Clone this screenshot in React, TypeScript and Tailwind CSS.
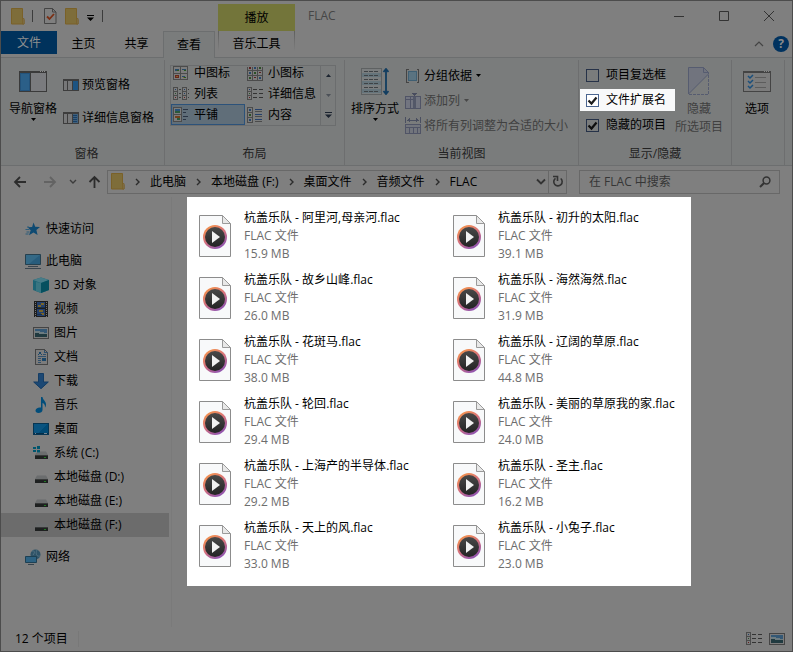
import React from "react";

type Kids = { children?: React.ReactNode };

const Folder = () => (
  <svg width="14" height="17" viewBox="0 0 14 17" aria-hidden="true">
    <path d="M.5.5h11v11h1.500v4.500H.5z" fill="#7e6d3a" stroke="#7a6128" />
    <path d="M11.500 10.500v5.500h1.500v-5.500z" fill="#7e7354" stroke="#7a6128" strokeWidth=".8" />
  </svg>
);

const DocCheck = () => (
  <svg width="13" height="16" viewBox="0 0 13 16" aria-hidden="true">
    <path d="M.5.5h8l3.500 3.500v11.500H.5z" fill="#7f7f7f" stroke="#444" />
    <path d="M8.500.5v3.500H12" fill="none" stroke="#444" />
    <path d="m3 8.500 2.500 2.500L10 6" fill="none" stroke="#7b2f14" strokeWidth="1.800" />
  </svg>
);

const Caret = ({ color = "#000", up = false }: { color?: string; up?: boolean }) => (
  <svg width="5" height="3" viewBox="0 0 5 3" aria-hidden="true">
    <path d={up ? "M0 3h5L2.500 0z" : "M0 0h5L2.500 3z"} fill={color} />
  </svg>
);

const MoreCaret = ({ color = "#000" }: { color?: string }) => (
  <svg width="7" height="6" viewBox="0 0 7 6" aria-hidden="true">
    <path d="M0 0h7v1H0zM0 2.500h7L3.500 6z" fill={color} />
  </svg>
);

const NavPane = () => (
  <svg width="28" height="21" viewBox="0 0 28 21" shapeRendering="crispEdges" aria-hidden="true">
    <path d="M0 0h28v21H0z" fill="#3a3a3a" />
    <path d="M1 2h10v18H1z" fill="#23527a" />
    <path d="M2 3h8v16H2z" fill="#2b5f88" />
    <path d="M12 2h15v18H12z" fill="#7a7b7e" />
    <path d="M21 0h1v1h-1zM23 0h1v1h-1zM25 0h1v1h-1z" fill="#8a8a8a" />
  </svg>
);

const SidePane = ({ lines = false }: { lines?: boolean }) => (
  <svg width="16" height="12" viewBox="0 0 16 12" shapeRendering="crispEdges" aria-hidden="true">
    <path d="M0 0h16v12H0z" fill="#3d3d3d" />
    <path d="M1 2h3v9H1zM5 2h4v9H5z" fill="#777879" />
    <path d="M10 2h5v9h-5z" fill={lines ? "#40607c" : "#1d5482"} />
    {lines && <path d="M10 3h4v1h-4zM10 5h4v1h-4zM10 7h4v1h-4zM10 9h4v1h-4z" fill="#173f66" />}
  </svg>
);

const MediumIcons = () => (
  <svg width="16" height="16" viewBox="0 0 16 16" shapeRendering="crispEdges" aria-hidden="true">
    <path d="M.5 1.500h14v13H.5zM7.500 1.500v13M.5 8h14" fill="#7c7c7c" stroke="#4b4b4b" />
    <path d="M2 4h4v2H2zM9 4h4v1H9zM9 11h3v1H9z" fill="#274a66" />
    <path d="M4 5h2v1H4zM11 5h2v1h-2zM11 12h2v1h-2z" fill="#29591d" />
    <path d="M2 10h4v3H2z" fill="#68261c" />
    <path d="M3 11h2v1H3zM10 12h1v1h-1z" fill="#846429" />
  </svg>
);

const SmallIcons = () => (
  <svg width="16" height="16" viewBox="0 0 16 16" shapeRendering="crispEdges" aria-hidden="true">
    <path d="M.5 2v13.500h15V2M5.500 2v14M10.500 2v14M0 5.500h16M0 10.500h16" fill="#7c7c7c" stroke="#4b4b4b" />
    <path d="M2 2h2v2H2zM12 7h2v1h-2zM7 12h2v1H7z" fill="#5a2222" />
    <path d="M7 2h2v2H7zM2 7h2v2H2zM12 12h2v2h-2z" fill="#27476a" />
    <path d="M12 2h2v2h-2zM7 7h2v2H7zM2 12h2v2H2z" fill="#2c4f26" />
  </svg>
);

const ListIcon = ({ double = false }: { double?: boolean }) => (
  <svg width="16" height="14" viewBox="0 0 16 14" shapeRendering="crispEdges" aria-hidden="true">
    <path d="M.5.5h4v12h-4zM.5 4.500h4M.5 8.500h4" fill="#7c7c7c" stroke="#4b4b4b" />
    <path d="M2 2h1v1H2z" fill="#203f66" />
    <path d="M2 6h1v1H2z" fill="#28512a" />
    <path d="M2 10h1v1H2z" fill="#631c1c" />
    {double ? (
      <>
        <path d="M9.500.5h4v12h-4zM9.500 4.500h4M9.500 8.500h4" fill="#7c7c7c" stroke="#4b4b4b" />
        <path d="M11 2h1v1h-1zM11 6h1v1h-1z" fill="#203f66" />
        <path d="M11 10h1v1h-1z" fill="#631c1c" />
        <path d="M6 2h2v1H6zM6 6h2v1H6zM6 10h2v1H6zM15 2h1v1h-1zM15 6h1v1h-1zM15 10h1v1h-1z" fill="#3c3c3c" />
      </>
    ) : (
      <path d="M6 2h4v1H6zM6 6h4v1H6zM6 10h4v1H6zM12 2h4v1h-4zM12 6h4v1h-4zM12 10h4v1h-4z" fill="#333" />
    )}
  </svg>
);

const TilesIcon = () => (
  <svg width="16" height="15" viewBox="0 0 16 15" shapeRendering="crispEdges" aria-hidden="true">
    <path d="M.5.5h8v14h-8zM.5 7.500h8" fill="#7c7c7c" stroke="#4b4b4b" />
    <path d="M2 2h5v2H2z" fill="#285279" />
    <path d="M2 4h5v2H2zM4 11h3v2H4z" fill="#29593b" />
    <path d="M2 9h5v2H2z" fill="#72401b" />
    <path d="M10 2h5v1h-5zM10 5h3v1h-3zM10 9h5v1h-5zM10 12h3v1h-3z" fill="#2a3444" />
  </svg>
);

const ContentIcon = () => (
  <svg width="16" height="16" viewBox="0 0 16 16" shapeRendering="crispEdges" aria-hidden="true">
    <path d="M.5.5h5v15h-5zM.5 5.500h5M.5 10.500h5" fill="#7c7c7c" stroke="#4b4b4b" />
    <path d="M2 2h2v2H2zM2 12h2v2H2z" fill="#27476a" />
    <path d="M2 7h2v2H2z" fill="#2c4f26" />
    <path d="M8 2h7v1H8zM8 7h7v1H8zM8 12h7v1H8z" fill="#25406b" />
    <path d="M8 4h7v1H8zM8 9h7v1H8zM8 14h7v1H8z" fill="#4b4b4b" />
  </svg>
);

const SortIcon = () => (
  <svg width="28" height="27" viewBox="0 0 28 27" aria-hidden="true">
    <g shapeRendering="crispEdges">
      <path d="M.5.5h20v26H.5z" fill="#7a7d7e" stroke="#5e6162" />
      <path d="M1 5h19v4H1zM1 13h19v4H1zM1 21h19v4H1z" fill="#65747b" />
      <path
        d="M3 3.500h15M3 7.500h15M3 11.500h15M3 15.500h15M3 19.500h15M3 23.500h15"
        stroke="#3e4245"
        strokeDasharray="4 1"
      />
    </g>
    <path d="M25 2v23M22.500 4 25 1l2.500 3M22.500 23l2.500 3 2.500-3" fill="none" stroke="#113d60" strokeWidth="1.800" />
  </svg>
);

const GroupIcon = () => (
  <svg width="16" height="16" viewBox="0 0 16 16" shapeRendering="crispEdges" aria-hidden="true">
    <path d="M3.500 1.500H1.500v13h2M11.500 1.500h2v13h-2" fill="none" stroke="#444" />
    <path d="M3.500 3.500h8v9h-8z" fill="#5a7381" stroke="#3f5f73" />
  </svg>
);

const AddColumnIcon = () => (
  <svg width="16" height="16" viewBox="0 0 16 16" shapeRendering="crispEdges" aria-hidden="true">
    <path d="M.5 3.500h15v12H.5zM.5 6.500h7M5.500 3.500v12M10.500 3.500v12" fill="#727580" stroke="#505466" />
    <path d="M8 4h3v11H8z" fill="#535868" />
    <path d="M7 0h5L9.500 3z" fill="#484c5e" />
  </svg>
);

const FitColumnsIcon = () => (
  <svg width="16" height="17" viewBox="0 0 16 17" shapeRendering="crispEdges" aria-hidden="true">
    <path d="M.5 0v6M15.500 0v6M2 3h12M4.500 1v4M11.500 1v4M3.500 2v2M12.500 2v2" fill="none" stroke="#4a4f60" />
    <path d="M.5 7.500h15v9H.5zM.5 10.500h15M4.500 10v7M8.500 10v7M12.500 10v7" fill="#72757c" stroke="#505466" />
  </svg>
);

const HideIcon = () => (
  <svg width="22" height="28" viewBox="0 0 22 28" aria-hidden="true">
    <path d="M.5 27V.5h15l5 5v1.500z" fill="#71747e" />
    <path d="M.5 27V.5h15l5 5v1.500zM15.500.5v5h5" fill="none" stroke="#565c70" />
    <path d="M20.500 8v19.500H.5" fill="none" stroke="#565c70" strokeDasharray="3 1" />
  </svg>
);

const OptionsIcon = () => (
  <svg width="28" height="21" viewBox="0 0 28 21" aria-hidden="true">
    <g shapeRendering="crispEdges">
      <path d="M0 0h28v21H0z" fill="#444" />
      <path d="M1 2h26v18H1z" fill="#7c7c7c" />
      <path d="M12 6h11v1H12zM12 11h11v1H12zM12 16h11v1H12z" fill="#5c5c5c" />
      <path d="M21 0h1v1h-1zM23 0h1v1h-1zM25 0h1v1h-1z" fill="#888" />
    </g>
    <path d="m5 5 2 2 3-3M5 10l2 2 3-3M5 15l2 2 3-3" fill="none" stroke="#1a4f7c" strokeWidth="1.500" />
  </svg>
);

const FlacIcon = () => (
  <svg className="mt-1.5 shrink-0" width="32" height="42" viewBox="0 0 32 42" aria-hidden="true">
    <defs>
      <linearGradient id="ring" x1="0.200" y1="0" x2="0.800" y2="1">
        <stop offset="0" stopColor="#f5954a" />
        <stop offset="0.450" stopColor="#d9737a" />
        <stop offset="1" stopColor="#8650b8" />
      </linearGradient>
      <linearGradient id="disc" x1="0" y1="0" x2="0" y2="1">
        <stop offset="0" stopColor="#484848" />
        <stop offset="1" stopColor="#242424" />
      </linearGradient>
    </defs>
    <path d="M.5.5h23l8 8v33H.5z" fill="#f8f9fa" stroke="#8c8c8c" />
    <path d="M23.500.5v8h8z" fill="#e8e8e8" stroke="#9a9a9a" />
    <circle cx="16" cy="22" r="12" fill="url(#ring)" />
    <circle cx="16" cy="22" r="10" fill="url(#disc)" />
    <path d="M13 16v12l8-6z" fill="#f2f2f2" />
  </svg>
);

const Star = () => (
  <svg width="16" height="16" viewBox="0 0 16 16" aria-hidden="true">
    <path d="m8.500 1.500 1.700 4.200 4.800.3-3.600 3 1.200 5-4.100-2.600-4.500 2.800 1.700-5L2.500 6.300l4.600-.4z" fill="#0e4a72" />
    <path d="M.5 8.500h4M1.500 11h3M.5 13h3M2 6h2" stroke="#2d5d7b" />
  </svg>
);
const Computer = () => (
  <svg width="16" height="16" viewBox="0 0 16 16" aria-hidden="true">
    <path d="M.5 1.500h15v10H.5z" fill="#285c7c" stroke="#25404f" />
    <path d="M1 2h14L4 11H1z" fill="#346986" />
    <path d="M3 13.500h10M0 15.500h16" stroke="#3a4650" />
  </svg>
);
const Cube = () => (
  <svg width="16" height="16" viewBox="0 0 16 16" aria-hidden="true">
    <path d="M0 3 8 .5 16 3v10l-8 3-8-3z" fill="#1d6475" />
    <path d="M0 3 8 .5 16 3 8 6z" fill="#477c88" />
    <path d="M8 6v10l8-3V3z" fill="#06505f" />
    <path d="M3 5v9l5 2V6z" fill="#397581" />
  </svg>
);
const Film = () => (
  <svg width="14" height="16" viewBox="0 0 14 16" shapeRendering="crispEdges" aria-hidden="true">
    <path d="M0 0h14v16H0z" fill="#1d1d1d" />
    <path d="M1.500 1v15M12.500 1v15" stroke="#747474" strokeDasharray="1 1" />
    <path d="M3 1h8v6H3zM3 8h8v7H3z" fill="#24406d" />
    <path d="M4 4h3v2H4zM7 2h3v2H7zM5 9h4v2H5zM7 12h3v2H7z" fill="#77642a" />
    <path d="M3 6h8v1H3zM3 13h5v1H3z" fill="#17304c" />
  </svg>
);
const Picture = () => (
  <svg width="16" height="12" viewBox="0 0 16 12" shapeRendering="crispEdges" aria-hidden="true">
    <path d="M.5.5h15v11H.5z" fill="#7c7c7c" stroke="#444" />
    <path d="M2 2h12v8H2z" fill="#345875" />
    <path d="M2 4h5v1h4v1h3v2H2z" fill="#6c7b80" />
    <path d="M2 6h4v1h8v3H2z" fill="#203a40" />
  </svg>
);
const Doc = () => (
  <svg width="13" height="16" viewBox="0 0 13 16" shapeRendering="crispEdges" aria-hidden="true">
    <path d="M.5.5h9l3 3v12H.5z" fill="#7c7c7c" stroke="#444" />
    <path d="M9.500.5v3h3M8 5.500h3M3 7.500h8M3 9.500h3M3 11.500h3M3 13.500h3" fill="none" stroke="#31506b" />
    <path d="M4 3h2v2H4zM3 5h1v1H3zM6 5h1v1H6zM7 9h4v3H7z" fill="#1b4769" />
  </svg>
);
const Download = () => (
  <svg width="16" height="16" viewBox="0 0 16 16" aria-hidden="true">
    <path d="M5.500.5h5V9h4.800L8 15.700.7 9h4.800z" fill="#1c4874" stroke="#153d64" />
  </svg>
);
const Note = () => (
  <svg width="12" height="16" viewBox="0 0 12 16" aria-hidden="true">
    <path d="M6 0h1.500c.3 3 3.500 4 3.500 7.500 0 1-.4 2.500-1 3 .2-2.500-.8-4-2.500-4.500v7C7.500 15 5.500 16 3.500 16 1.500 16 .5 15 .5 13.500c0-2 2.500-3.500 5.500-3z" fill="#014d7a" />
  </svg>
);
const Desktop = () => (
  <svg width="16" height="12" viewBox="0 0 16 12" shapeRendering="crispEdges" aria-hidden="true">
    <path d="M.5.5h15v11H.5z" fill="#004a75" stroke="#073552" />
    <path d="M1 1h13L5 10H1z" fill="#0a5480" />
    <path d="M1 10h14v1H1z" fill="#032e4a" />
    <path d="M2 10h1v1H2zM11 10h3v1h-3z" fill="#758592" />
  </svg>
);
const Drive = ({ system = false }: { system?: boolean }) => (
  <svg width="16" height="16" viewBox="0 0 16 16" aria-hidden="true">
    <path d="M4 6.500h9l2 3.500H2z" fill="#6b6d6e" />
    <path d="M2 10h13v4H2z" fill="#1e2020" />
    <path d="M2 10h13v1H2z" fill="#373939" />
    <path d="M11 12h2v1h-2z" fill="#207a22" />
    {system && (
      <>
        <path d="M0 1h7v7H0z" fill="#7f7f7f" />
        <path d="M0 2h3v2H0zM4 1h3v3H4zM0 5h3v2H0zM4 5h3v2.500H4z" fill="#00566e" />
      </>
    )}
  </svg>
);
const Network = () => (
  <svg width="16" height="16" viewBox="0 0 16 16" aria-hidden="true">
    <circle cx="10.500" cy="5.500" r="5" fill="#2f5367" />
    <path d="M7 2c3-1 3 2 1 4M12 1c-2 4 0 7 3 6" fill="none" stroke="#506f80" />
    <path d="M.5 7.500h11v6H.5z" fill="#2d6282" stroke="#1d4053" />
    <path d="M3 15.500h6" stroke="#36444d" />
  </svg>
);

const Crumb = () => (
  <svg className="mx-2.5 shrink-0" width="5" height="8" viewBox="0 0 5 8" aria-hidden="true">
    <path d="m1 1 3 3-3 3" fill="none" stroke="#2c2c2c" strokeWidth="1.400" />
  </svg>
);

const DownChevron = () => (
  <svg width="10" height="7" viewBox="0 0 10 7" aria-hidden="true">
    <path d="m1 1.500 4 4 4-4" fill="none" stroke="#333" strokeWidth="1.800" />
  </svg>
);

const Group = ({ title, className, children }: Kids & { title: string; className: string }) => (
  <section className={`flex shrink-0 flex-col border-r border-[#6d6e6f] ${className}`} aria-label={title || "选项"}>
    <div className="flex h-[85px]">{children}</div>
    <h2 className="h-[18px] text-center leading-[18px] text-[#222]">{title}</h2>
  </section>
);

const BigButton = ({ icon, caret, disabled, children }: Kids & { icon: React.ReactNode; caret?: boolean; disabled?: boolean }) => (
  <button type="button" disabled={disabled} className="flex shrink-0 flex-col items-center pt-[7px] disabled:text-[#404040]">
    <span className="mb-[5px] flex h-7 items-center">{icon}</span>
    <span className="leading-[18px]">{children}</span>
    {caret && <Caret />}
  </button>
);

const RowButton = ({ icon, caret, disabled, children }: Kids & { icon: React.ReactNode; caret?: boolean; disabled?: boolean }) => (
  <button type="button" disabled={disabled} className="flex h-[25px] items-center whitespace-nowrap disabled:text-[#404040]">
    <span className="mr-[3px]">{icon}</span>
    <span className="mr-1">{children}</span>
    {caret && <Caret color={disabled ? "#484848" : "#000"} />}
  </button>
);

const GalleryItem = ({ icon, selected, children }: Kids & { icon: React.ReactNode; selected?: boolean }) => (
  <button
    type="button"
    aria-pressed={!!selected}
    className={`flex h-[21px] items-center border pl-px leading-none ${selected ? "border-[#2c527a] bg-[#606e79]" : "border-transparent"}`}
  >
    <span className="mr-[5px] w-4">{icon}</span>
    {children}
  </button>
);

const Check = ({ label, checked, lit }: { label: string; checked?: boolean; lit?: boolean }) => (
  <label className={`flex h-[22px] items-center gap-[7px] pr-[9px] pl-1.5 ${lit ? "bg-[#f8f9fa]" : ""}`}>
    <span className="relative size-[13px]">
      <input
        type="checkbox"
        defaultChecked={checked}
        className={`peer block size-[13px] appearance-none border ${lit ? "border-[#4a6590] bg-white" : "border-[#263248]"}`}
      />
      <svg className="pointer-events-none absolute inset-0 hidden peer-checked:block" width="13" height="13" viewBox="0 0 13 13" aria-hidden="true">
        <path d="m2.500 6.500 3 3 5-6" fill="none" stroke={lit ? "#1c1c1c" : "#0e0e0e"} strokeWidth="2.200" />
      </svg>
    </span>
    {label}
  </label>
);

const Tab = ({ active, className, children }: Kids & { active?: boolean; className: string }) => (
  <button
    type="button"
    role="tab"
    aria-selected={!!active}
    className={`h-[27px] shrink-0 ${active ? "border-x border-t border-[#6c6e6f] bg-[#7a7c7c]" : "border-b border-[#6c6e6f]"} ${className}`}
  >
    {children}
  </button>
);

const places = [
  { name: "3D 对象", icon: <Cube /> },
  { name: "视频", icon: <Film /> },
  { name: "图片", icon: <Picture /> },
  { name: "文档", icon: <Doc /> },
  { name: "下载", icon: <Download /> },
  { name: "音乐", icon: <Note /> },
  { name: "桌面", icon: <Desktop /> },
  { name: "系统 (C:)", icon: <Drive system /> },
  { name: "本地磁盘 (D:)", icon: <Drive /> },
  { name: "本地磁盘 (E:)", icon: <Drive /> },
  { name: "本地磁盘 (F:)", icon: <Drive />, selected: true },
];

const Place = ({ name, icon, nested, selected }: { name: string; icon: React.ReactNode; nested?: boolean; selected?: boolean }) => (
  <li>
    <a
      href="#"
      aria-current={selected ? "page" : undefined}
      className={`flex h-6 items-center gap-[5px] ${nested ? "pl-8" : "pl-6"} ${selected ? "bg-[#6c6c6c]" : ""}`}
    >
      <span className="flex w-4 justify-center">{icon}</span>
      {name}
    </a>
  </li>
);

const files = [
  ["阿里河,母亲河", "15.9"],
  ["初升的太阳", "39.1"],
  ["故乡山峰", "26.0"],
  ["海然海然", "31.9"],
  ["花斑马", "38.0"],
  ["辽阔的草原", "44.8"],
  ["轮回", "29.4"],
  ["美丽的草原我的家", "24.0"],
  ["上海产的半导体", "29.2"],
  ["圣主", "16.2"],
  ["天上的风", "33.0"],
  ["小兔子", "23.0"],
];

const path = ["此电脑", "本地磁盘 (F:)", "桌面文件", "音频文件"];

export default function App() {
  return (
    <div className="flex min-h-screen flex-col border border-[#4c4c4c] bg-[#7f7f7f] font-['Open_Sans','Noto_Sans_CJK_SC',sans-serif] text-xs text-black">
      <header className="flex h-[30px] items-end">
        <div className="flex h-[30px] w-[217px] shrink-0 items-center pl-2.5">
          <Folder />
          <span className="mx-[7px] h-3 w-px bg-[#3c3c3c]" />
          <span className="ml-1"><DocCheck /></span>
          <span className="ml-2"><Folder /></span>
          <button type="button" aria-label="自定义快速访问工具栏" className="ml-2 pt-1"><MoreCaret /></button>
          <span className="ml-2 h-3 w-px bg-[#3c3c3c]" />
        </div>
        <div className="h-[27px] w-[77px] shrink-0 bg-[#73753a] text-center leading-[27px]">播放</div>
        <h1 className="ml-[13px] flex-1 self-center text-[#464646]">FLAC</h1>
        <div className="flex h-[30px] items-center">
          <button type="button" aria-label="最小化" className="flex h-7 w-[45px] items-center justify-center">
            <svg width="10" height="10" viewBox="0 0 10 10"><path d="M0 5.500h10" stroke="#333" /></svg>
          </button>
          <button type="button" aria-label="最大化" className="flex h-7 w-[45px] items-center justify-center">
            <svg width="10" height="10" viewBox="0 0 10 10"><path d="M.5.5h9v9h-9z" fill="none" stroke="#333" /></svg>
          </button>
          <button type="button" aria-label="关闭" className="flex h-7 w-[46px] items-center justify-center">
            <svg width="10" height="10" viewBox="0 0 10 10"><path d="m0 0 10 10M10 0 0 10" fill="none" stroke="#333" /></svg>
          </button>
        </div>
      </header>

      <div role="tablist" className="flex h-[27px]">
        <div className="border-b border-[#6c6e6f]">
          <button type="button" role="tab" aria-selected="false" className="h-[23px] w-14 bg-[#00325c] text-[#8f8f8f]">文件</button>
        </div>
        <Tab className="w-[53px]">主页</Tab>
        <Tab className="w-[53px]">共享</Tab>
        <Tab active className="w-[52px]">查看</Tab>
        <div className="w-[3px] border-b border-[#6c6e6f]" />
        <div className="flex w-[77px] border-b border-[#6c6e6f]">
          <span className="h-5 w-px bg-linear-to-b from-[#5f5f5f] to-[#7f7f7f]" />
          <button type="button" role="tab" aria-selected="false" className="h-[26px] flex-1">音乐工具</button>
          <span className="h-5 w-px bg-linear-to-b from-[#5f5f5f] to-[#7f7f7f]" />
        </div>
        <div className="flex flex-1 items-center justify-end gap-[9px] border-b border-[#6c6e6f] pr-[3px]">
          <button type="button" aria-label="最小化功能区">
            <svg width="10" height="6" viewBox="0 0 10 6"><path d="m1 5 4-4 4 4" fill="none" stroke="#444" strokeWidth="1.200" /></svg>
          </button>
          <button type="button" aria-label="帮助" className="size-4 rounded-full bg-[#00325f] text-center text-xs leading-4 font-bold text-[#8b8b8b]">?</button>
        </div>
      </div>

      <div className="flex h-[108px] overflow-hidden border-b border-[#6c6e6f] bg-[#7a7c7c] pt-0.5">
        <Group title="窗格" className="w-[164px] pl-2">
          <BigButton icon={<NavPane />} caret>导航窗格</BigButton>
          <div className="ml-1.5 flex flex-col gap-2 pt-3">
            <RowButton icon={<SidePane />}>预览窗格</RowButton>
            <RowButton icon={<SidePane lines />}>详细信息窗格</RowButton>
          </div>
        </Group>
        <Group title="布局" className="w-[180px]">
          <div className="mt-[5px] ml-[5px] flex h-[61px] w-[166px] border border-[#6b6d6e]">
            <div className="grid flex-1 grid-cols-[74px_1fr] content-end">
              <GalleryItem icon={<MediumIcons />}>中图标</GalleryItem>
              <GalleryItem icon={<SmallIcons />}>小图标</GalleryItem>
              <GalleryItem icon={<ListIcon double />}>列表</GalleryItem>
              <GalleryItem icon={<ListIcon />}>详细信息</GalleryItem>
              <GalleryItem icon={<TilesIcon />} selected>平铺</GalleryItem>
              <GalleryItem icon={<ContentIcon />}>内容</GalleryItem>
            </div>
            <div className="grid w-[15px] grid-rows-3 border-l border-[#6b6d6e]">
              <button type="button" aria-label="上一行" className="flex items-center justify-center"><Caret up color="#1c2430" /></button>
              <button type="button" aria-label="下一行" className="flex items-center justify-center"><Caret color="#4c5158" /></button>
              <button type="button" aria-label="更多" className="flex items-center justify-center"><MoreCaret color="#1c2430" /></button>
            </div>
          </div>
        </Group>
        <Group title="当前视图" className="w-[234px]">
          <div className="ml-1.5 flex">
            <BigButton icon={<SortIcon />} caret>排序方式</BigButton>
            <div className="ml-1.5 flex flex-col pt-[3px]">
              <RowButton icon={<GroupIcon />} caret>分组依据</RowButton>
              <RowButton icon={<AddColumnIcon />} caret disabled>添加列</RowButton>
              <RowButton icon={<FitColumnsIcon />} disabled>将所有列调整为合适的大小</RowButton>
            </div>
          </div>
        </Group>
        <Group title="显示/隐藏" className="w-[153px]">
          <div className="ml-px flex flex-col gap-[3px] pt-1">
            <Check label="项目复选框" />
            <Check label="文件扩展名" checked lit />
            <Check label="隐藏的项目" checked />
          </div>
          <BigButton icon={<HideIcon />} disabled>隐藏<br />所选项目</BigButton>
        </Group>
        <Group title="" className="w-[53px]">
          <div className="ml-[11px]">
            <BigButton icon={<OptionsIcon />}>选项</BigButton>
          </div>
        </Group>
      </div>

      <div className="flex h-[31px] items-center pr-3">
        <div className="flex w-[106px] shrink-0 items-center pl-3">
          <button type="button" aria-label="后退">
            <svg width="14" height="12" viewBox="0 0 14 12"><path d="M13 6H2M7 1 2 6l5 5" fill="none" stroke="#2c2c2c" strokeWidth="1.800" /></svg>
          </button>
          <button type="button" aria-label="前进" className="ml-4">
            <svg width="14" height="12" viewBox="0 0 14 12"><path d="M1 6h11M7 1l5 5-5 5" fill="none" stroke="#636363" strokeWidth="1.800" /></svg>
          </button>
          <button type="button" aria-label="最近浏览的位置" className="ml-3">
            <svg width="8" height="6" viewBox="0 0 8 6"><path d="m1 1 3 3 3-3" fill="none" stroke="#3c3c3c" strokeWidth="1.400" /></svg>
          </button>
          <button type="button" aria-label="向上" className="ml-[11px]">
            <svg width="13" height="13" viewBox="0 0 13 13"><path d="M6.500 13V2M1.500 7l5-5 5 5" fill="none" stroke="#2c2c2c" strokeWidth="1.800" /></svg>
          </button>
        </div>
        <nav aria-label="地址" className="flex h-6 flex-1 items-center border border-[#686868] pl-[3px] whitespace-nowrap">
          <Folder />
          {path.map((p) => (
            <React.Fragment key={p}>
              <Crumb />
              <a href="#">{p}</a>
            </React.Fragment>
          ))}
          <Crumb />
          <a href="#" className="flex-1">FLAC</a>
          <button type="button" aria-label="展开地址" className="mr-0.5"><DownChevron /></button>
          <button type="button" aria-label="刷新" className="flex h-full w-[18px] items-center justify-center border-l border-[#686868]">
            <svg width="12" height="13" viewBox="0 0 12 13">
              <path d="M3.500 3.300A4.200 4.200 0 1 0 8.700 3.500" fill="none" stroke="#333" strokeWidth="1.600" />
              <path d="M1 1.500h4.500V6" fill="none" stroke="#333" strokeWidth="1.600" />
            </svg>
          </button>
        </nav>
        <label className="ml-3 flex h-6 w-[201px] items-center border border-[#686868] pr-2 pl-[9px]">
          <input type="text" aria-label="搜索" placeholder="在 FLAC 中搜索" className="min-w-0 flex-1 bg-transparent outline-none placeholder:text-[#363636]" />
          <svg width="12" height="12" viewBox="0 0 12 12" aria-hidden="true"><path d="M5 7 1 11" stroke="#333" strokeWidth="2" /><circle cx="7.500" cy="4.500" r="3.400" fill="none" stroke="#333" strokeWidth="1.500" /></svg>
        </label>
      </div>

      <main className="flex flex-1">
        <nav aria-label="导航窗格" className="w-[171px] shrink-0 border-r border-[#7a7a7a] pt-5 pr-0.5">
          <ul>
            <Place name="快速访问" icon={<Star />} />
          </ul>
          <ul className="mt-2">
            <Place name="此电脑" icon={<Computer />} />
            {places.map((p) => (
              <Place key={p.name} {...p} nested />
            ))}
          </ul>
          <ul className="mt-2">
            <Place name="网络" icon={<Network />} />
          </ul>
        </nav>
        <ul className="ml-[15px] grid w-[504px] grid-cols-[254px_1fr] gap-y-2 self-start bg-white pt-3 pb-[13px] pl-3">
          {files.map(([name, size]) => (
            <li key={name} className="flex gap-[13px] leading-[18px] whitespace-nowrap text-[#6d6d6d]">
              <FlacIcon />
              <div>
                <p className="text-black">杭盖乐队 - {name}.flac</p>
                <p>FLAC 文件</p>
                <p>{size} MB</p>
              </div>
            </li>
          ))}
        </ul>
      </main>

      <footer className="flex h-6 items-center pr-[7px] pl-3.5">
        <span className="border-r border-[#787878] pr-2.5">12 个项目</span>
        <button type="button" aria-label="详细信息视图" className="mr-[7px] ml-auto"><ListIcon /></button>
        <button type="button" aria-label="大图标视图"><Picture /></button>
      </footer>
    </div>
  );
}
